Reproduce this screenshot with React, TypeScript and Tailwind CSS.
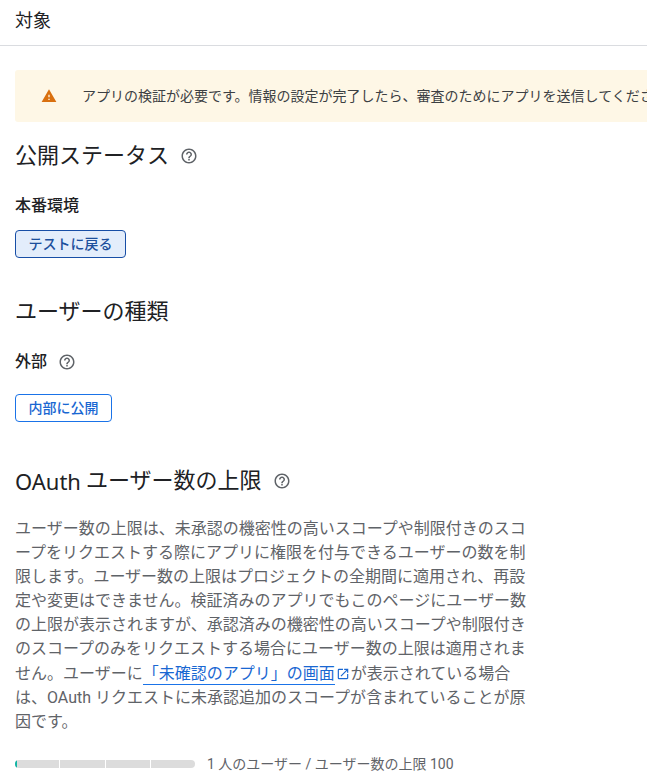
const Help = ({ className }: { className: string }) => (
  <svg viewBox="0 0 24 24" className={className} fill="#5f6368">
    <path d="M11 18h2v-2h-2v2zm1-16C6.48 2 2 6.48 2 12s4.48 10 10 10 10-4.48 10-10S17.52 2 12 2zm0 18c-4.41 0-8-3.59-8-8s3.59-8 8-8 8 3.59 8 8-3.59 8-8 8zm0-14c-2.21 0-4 1.79-4 4h2c0-1.1.9-2 2-2s2 .9 2 2c0 2-3 1.75-3 5h2c0-2.25 3-2.5 3-5 0-2.21-1.79-4-4-4z" />
  </svg>
);

export default function App() {
  return (
    <div className="h-[776px] w-[647px] overflow-hidden bg-white text-[#202124]" style={{ fontFamily: '"Roboto","Noto Sans CJK JP",sans-serif' }}>
      <div className="flex h-[46px] items-center border-b border-[#dadce0] pb-[4px] pl-[15px] text-[18px]">対象</div>
      <div className="pl-[15px] pt-6">
        <div className="flex h-[52px] w-[700px] items-center rounded-[3px] bg-[#fef7e6] pl-[27px] text-[14px] text-[#3c4043]">
          <svg viewBox="0 0 24 24" className="mr-[26px] h-[14px] w-[14px] shrink-0 scale-[1.15]" fill="#d9700f"><path d="M1 21h22L12 2 1 21zm12-3h-2v-2h2v2zm0-4h-2v-4h2v4z" /></svg>
          <span className="whitespace-nowrap">アプリの検証が必要です。情報の設定が完了したら、審査のためにアプリを送信してください。</span>
        </div>
        <div className="mt-[18px] flex items-center text-[22px] leading-[32px]">公開ステータス<Help className="ml-[11px] h-[18px] w-[18px]" /></div>
        <div className="mt-[24px] text-[16px] font-medium leading-[20px]">本番環境</div>
        <button className="mt-[14px] flex h-[28px] w-[111px] items-center justify-center rounded-[4px] border border-[#174ea6] bg-[#e3edfb] text-[14px] font-medium text-[#1c4f9c]">テストに戻る</button>
        <div className="mt-[38px] text-[22px] leading-[32px]">ユーザーの種類</div>
        <div className="mt-[24px] flex items-center text-[16px] font-medium leading-[20px]">外部<Help className="ml-[11px] h-[18px] w-[18px]" /></div>
        <button className="mt-[22px] flex h-[28px] w-[97px] items-center justify-center rounded-[4px] border border-[#1a73e8] text-[14px] font-medium text-[#1967d2]">内部に公開</button>
        <div className="mt-[43px] flex items-center text-[22px] leading-[32px]"><span style={{ fontFamily: '"Noto Sans","Noto Sans CJK JP",sans-serif' }}>OAuth</span><span className="ml-[5px]">ユーザー数の上限</span><Help className="ml-[11px] h-[18px] w-[18px]" /></div>
        <p className="mt-[20px] w-[512px] text-[16px] leading-[24.1px] text-[#5f6368]">
          ユーザー数の上限は、未承認の機密性の高いスコープや制限付きのスコープをリクエストする際にアプリに権限を付与できるユーザーの数を制限します。ユーザー数の上限はプロジェクトの全期間に適用され、再設定や変更はできません。検証済みのアプリでもこのページにユーザー数の上限が表示されますが、承認済みの機密性の高いスコープや制限付きのスコープのみをリクエストする場合にユーザー数の上限は適用されません。ユーザーに
          <span className="border-b border-[#1a73e8] pb-[1px] text-[#1967d2]">「未確認のアプリ」の画面</span>
          <svg viewBox="0 0 24 24" className="mx-[1px] inline h-[14px] w-[14px] align-[-2px]" fill="#1967d2"><path d="M19 19H5V5h7V3H5a2 2 0 0 0-2 2v14a2 2 0 0 0 2 2h14c1.1 0 2-.9 2-2v-7h-2v7zM14 3v2h3.59l-9.83 9.83 1.41 1.41L19 6.41V10h2V3h-7z" /></svg>
          が表示されている場合は、OAuth リクエストに未承認追加のスコープが含まれていることが原因です。
        </p>
        <div className="mt-[20px] flex items-center gap-3">
          <div className="flex h-[8px] w-[180px] gap-px overflow-hidden rounded-full bg-white">
            <div className="flex-1 bg-[#dcdcdc]"><div className="h-full w-[2px] bg-[#12b5a5]" /></div>
            <div className="flex-1 bg-[#dcdcdc]" />
            <div className="flex-1 bg-[#dcdcdc]" />
            <div className="flex-1 bg-[#dcdcdc]" />
          </div>
          <span className="text-[14px] text-[#5f6368]">1 人のユーザー / ユーザー数の上限 100</span>
        </div>
      </div>
    </div>
  );
}
